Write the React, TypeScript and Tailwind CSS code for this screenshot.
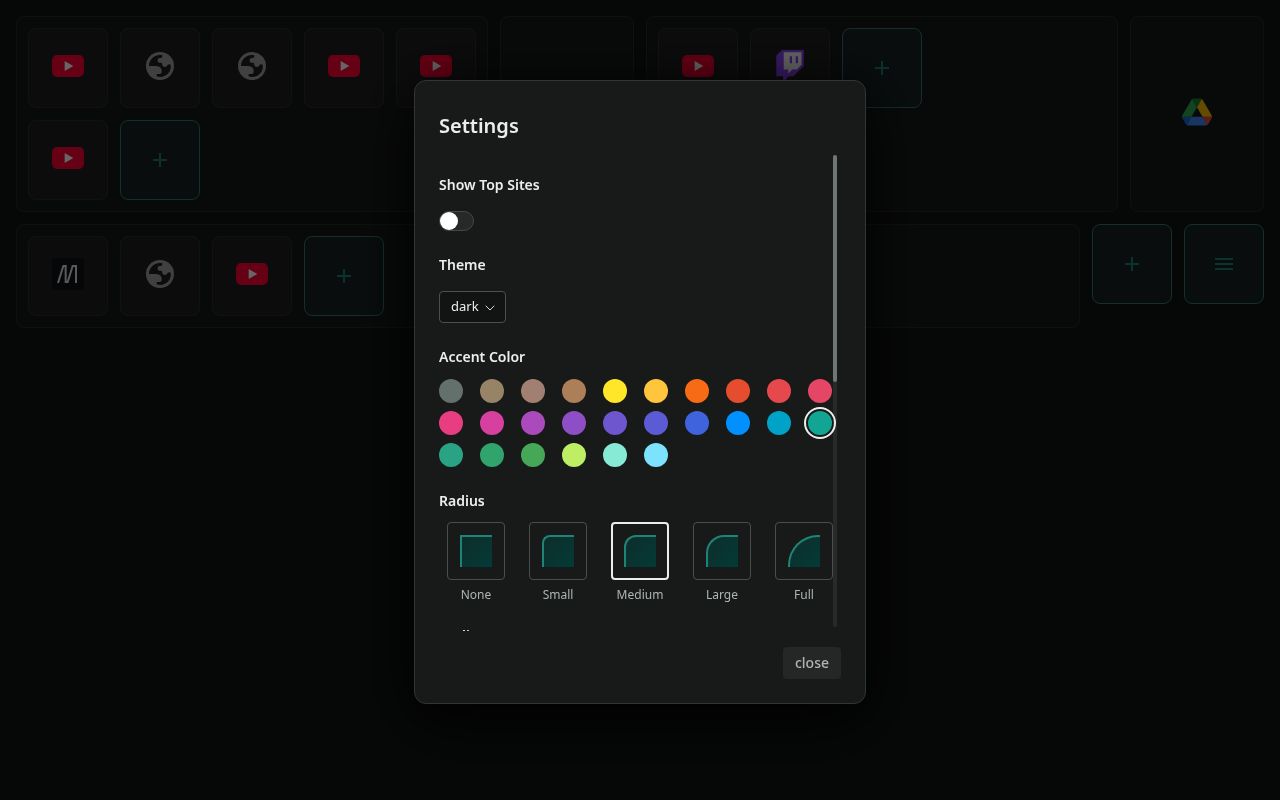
import { useState } from 'react';
import type { ReactNode } from 'react';
import { MdAdd, MdMenu } from 'react-icons/md';

const accents = [
  { name: 'gray', bg: 'bg-[#63706b]' },
  { name: 'gold', bg: 'bg-[#978365]' },
  { name: 'bronze', bg: 'bg-[#a18072]' },
  { name: 'brown', bg: 'bg-[#ad7f58]' },
  { name: 'yellow', bg: 'bg-[#ffe629]' },
  { name: 'amber', bg: 'bg-[#ffc53d]' },
  { name: 'orange', bg: 'bg-[#f76b15]' },
  { name: 'tomato', bg: 'bg-[#e54d2e]' },
  { name: 'red', bg: 'bg-[#e5484d]' },
  { name: 'ruby', bg: 'bg-[#e54666]' },
  { name: 'crimson', bg: 'bg-[#e93d82]' },
  { name: 'pink', bg: 'bg-[#d6409f]' },
  { name: 'plum', bg: 'bg-[#ab4aba]' },
  { name: 'purple', bg: 'bg-[#8e4ec6]' },
  { name: 'violet', bg: 'bg-[#6e56cf]' },
  { name: 'iris', bg: 'bg-[#5b5bd6]' },
  { name: 'indigo', bg: 'bg-[#3e63dd]' },
  { name: 'blue', bg: 'bg-[#0090ff]' },
  { name: 'cyan', bg: 'bg-[#00a2c7]' },
  { name: 'teal', bg: 'bg-[#12a594]' },
  { name: 'jade', bg: 'bg-[#29a383]' },
  { name: 'green', bg: 'bg-[#30a46c]' },
  { name: 'grass', bg: 'bg-[#46a758]' },
  { name: 'lime', bg: 'bg-[#bdee63]' },
  { name: 'mint', bg: 'bg-[#86ead4]' },
  { name: 'sky', bg: 'bg-[#7ce2fe]' },
];

const radii = [
  { name: 'None', corner: 'rounded-none' },
  { name: 'Small', corner: 'rounded-tl-lg' },
  { name: 'Medium', corner: 'rounded-tl-xl' },
  { name: 'Large', corner: 'rounded-tl-[18px]' },
  { name: 'Full', corner: 'rounded-tl-[30px]' },
];

function YouTube() {
  return (
    <svg viewBox="0 0 96 96" className="w-8 h-8">
      <rect x="0" y="15" width="96" height="66" rx="15" fill="#ff0033" />
      <path d="M38 33v30l26-15z" fill="#fff" />
    </svg>
  );
}

function Globe() {
  return (
    <svg viewBox="0 0 96 96" className="w-8 h-8">
      <circle cx="48" cy="48" r="42" fill="#a0a1a3" />
      <path
        d="M15 48 C15 30 29 15 47 15 C50 15 53 15 55 16 V19 Q55 24 50 24 H47 Q41 24 41 30 V34 Q41 38 46 38 H50 Q55 38 55 43 V45 Q55 50 60 50 H66 Q69 50 70 46 Q72 43 76 43 L80 44 C84 63 68 81 48 81 C45 81 41 80 38 79 V72 H47 Q53 72 53 66 V62 Q52 49 37 48 Z"
        fill="#1f1f1f"
      />
    </svg>
  );
}

function Twitch() {
  return (
    <svg viewBox="0 0 2400 2800" className="w-8 h-8">
      <path d="M500 0 0 500v1800h600v500l500-500h400l900-900V0z" fill="#9146ff" />
      <path d="M2200 1300l-400 400h-400l-350 350v-350H650V200h1550z" fill="#fff" />
      <path d="M1700 550h200v600h-200zM1180 550h200v600h-200z" fill="#9146ff" />
    </svg>
  );
}

function Drive() {
  return (
    <svg viewBox="0 0 87.3 78" className="w-[30px] h-8">
      <path d="M6.6 66.85l3.85 6.65c.8 1.4 1.95 2.5 3.3 3.3L27.5 53H0c0 1.55.4 3.1 1.2 4.5z" fill="#1967d2" />
      <path d="M43.65 25L29.9 1.2c-1.35.8-2.5 1.9-3.3 3.3l-25.4 44A9.06 9.06 0 000 53h27.5z" fill="#34a853" />
      <path d="M73.55 76.8c1.35-.8 2.5-1.9 3.3-3.3l1.6-2.75 7.65-13.25c.8-1.4 1.2-2.95 1.2-4.5H59.8l5.85 11.5z" fill="#ea4335" />
      <path d="M43.65 25L57.4 1.2C56.05.4 54.5 0 52.9 0H34.4c-1.6 0-3.15.45-4.5 1.2z" fill="#188038" />
      <path d="M59.8 53H27.5L13.75 76.8c1.35.8 2.9 1.2 4.5 1.2h50.8c1.6 0 3.15-.45 4.5-1.2z" fill="#4285f4" />
      <path d="M73.4 26.5l-12.7-22c-.8-1.4-1.95-2.5-3.3-3.3L43.65 25 59.8 53h27.45c0-1.55-.4-3.1-1.2-4.5z" fill="#fbbc04" />
    </svg>
  );
}

function Monogram() {
  return (
    <svg viewBox="0 0 96 96" className="w-8 h-8">
      <rect width="96" height="96" rx="12" fill="#111216" />
      <path d="M18 75 34 24h7v48h6L62 24h10v51" fill="none" stroke="#e0e0e0" strokeWidth="6" />
    </svg>
  );
}

function Tile({ label, children }: { label: string; children: ReactNode }) {
  return (
    <a
      href="#"
      aria-label={label}
      className="w-20 h-20 pb-1 flex items-center justify-center rounded-lg border border-[#2f2f2f] bg-[#1f1f1f]"
    >
      {children}
    </a>
  );
}

function ActionTile({ label, children }: { label: string; children: ReactNode }) {
  return (
    <button
      aria-label={label}
      className="w-20 h-20 shrink-0 flex items-center justify-center rounded-lg border border-[#30766c] bg-[#182223] text-[#207e73]"
    >
      {children}
    </button>
  );
}

function Group({ className = '', children }: { className?: string; children?: ReactNode }) {
  return (
    <section
      className={`${className} p-[11px] flex flex-wrap content-start gap-3 rounded-lg border border-[#272a29] bg-[#161918]`}
    >
      {children}
    </section>
  );
}

function Dashboard() {
  return (
    <main className="p-4 flex flex-col gap-3">
      <div className="grid grid-cols-[472px_1fr_472px_1fr] gap-3">
        <Group>
          <Tile label="YouTube"><YouTube /></Tile>
          <Tile label="Website"><Globe /></Tile>
          <Tile label="Website"><Globe /></Tile>
          <Tile label="YouTube"><YouTube /></Tile>
          <Tile label="YouTube"><YouTube /></Tile>
          <Tile label="YouTube"><YouTube /></Tile>
          <ActionTile label="Add site"><MdAdd size={24} /></ActionTile>
        </Group>
        <Group />
        <Group>
          <Tile label="YouTube"><YouTube /></Tile>
          <Tile label="Twitch"><Twitch /></Tile>
          <ActionTile label="Add site"><MdAdd size={24} /></ActionTile>
        </Group>
        <a
          href="#"
          aria-label="Google Drive"
          className="pb-1 flex items-center justify-center rounded-lg border border-[#272a29] bg-[#161918]"
        >
          <Drive />
        </a>
      </div>

      <div className="flex items-start gap-3">
        <Group className="flex-1">
          <Tile label="Monogram"><Monogram /></Tile>
          <Tile label="Website"><Globe /></Tile>
          <Tile label="YouTube"><YouTube /></Tile>
          <ActionTile label="Add site"><MdAdd size={24} /></ActionTile>
        </Group>
        <ActionTile label="Add group"><MdAdd size={24} /></ActionTile>
        <ActionTile label="Menu"><MdMenu size={24} /></ActionTile>
      </div>
    </main>
  );
}

function SettingsDialog() {
  const [topSites, setTopSites] = useState(false);
  const [theme, setTheme] = useState('dark');
  const [accent, setAccent] = useState('teal');
  const [radius, setRadius] = useState('Medium');

  return (
    <div
      role="dialog"
      aria-labelledby="settings-title"
      className="w-full max-w-[452px] p-6 rounded-xl border border-[#313534] bg-[#181a19] shadow-[0_12px_60px_rgba(0,0,0,0.6),0_16px_64px_rgba(0,0,0,0.6)]"
    >
      <h1 id="settings-title" className="pt-[7px] pb-[11px] text-xl leading-7 font-semibold">
        Settings
      </h1>

      <div className="relative h-[480px] overflow-hidden pt-6">
        {/* scrollbar */}
        <div className="absolute top-1 bottom-1 right-1 w-1 rounded-full bg-[#272a29]">
          <div className="h-[227px] rounded-full bg-[#6f7674]"></div>
        </div>

        <label htmlFor="top-sites" className="block text-sm font-semibold">Show Top Sites</label>
        <input
          id="top-sites"
          type="checkbox"
          checked={topSites}
          onChange={(e) => setTopSites(e.target.checked)}
          className="block mt-4 w-[35px] h-5 appearance-none rounded-full border border-[#434746] bg-[#262928] before:block before:w-[18px] before:h-[18px] before:rounded-full before:bg-white checked:before:translate-x-[15px]"
        />

        <label htmlFor="theme" className="block mt-6 text-sm font-semibold">Theme</label>
        <div className="relative mt-4 w-[67px]">
          <select
            id="theme"
            value={theme}
            onChange={(e) => setTheme(e.target.value)}
            className="block w-full h-8 pl-[11px] appearance-none rounded border border-[#4b504e] bg-[#121413] text-[13px] text-[#eceeed]"
          >
            <option>dark</option>
            <option>light</option>
          </select>
          <svg viewBox="0 0 10 6" className="absolute right-[11px] top-[14px] w-[10px] h-[6px] pointer-events-none">
            <path d="M1 1l4 4 4-4" fill="none" stroke="#d4d8d6" strokeLinecap="round" strokeLinejoin="round" />
          </svg>
        </div>

        <h2 className="mt-6 text-sm font-semibold">Accent Color</h2>
        <div className="mt-3 grid grid-cols-10 gap-2">
          {accents.map((a) => (
            <input
              key={a.name}
              type="radio"
              name="accent"
              aria-label={a.name}
              checked={accent === a.name}
              onChange={() => setAccent(a.name)}
              className={`${a.bg} relative w-6 h-6 appearance-none rounded-full outline-offset-2 outline-[#eceeed] checked:outline-2`}
            />
          ))}
        </div>

        <h2 className="mt-6 text-sm font-semibold">Radius</h2>
        <div className="mt-[11px] grid grid-cols-5 gap-2">
          {radii.map((r) => (
            <label key={r.name} className="flex flex-col items-center gap-[7px] text-xs text-[#adb5b2]">
              <input
                type="radio"
                name="radius"
                checked={radius === r.name}
                onChange={() => setRadius(r.name)}
                className="peer sr-only"
              />
              <span className="w-[58px] h-[58px] flex items-center justify-center rounded border border-[#494d4b] peer-checked:border-2 peer-checked:border-[#eceeed]">
                <span className={`${r.corner} w-8 h-8 border-t-2 border-l-2 border-[#208377] bg-linear-to-br from-[#0d2d2a] to-[#023b37]`}></span>
              </span>
              {r.name}
            </label>
          ))}
        </div>

        <h2 className="mt-[23px] text-sm font-semibold">Scaling</h2>
      </div>

      <div className="mt-4 flex justify-end">
        <button className="h-8 px-3 rounded bg-[#252726] text-sm font-medium text-[#b0b5b3]">close</button>
      </div>
    </div>
  );
}

export default function App() {
  return (
    <div className="min-h-screen bg-[#101312] text-[#eceeed] font-['Noto_Sans',sans-serif]">
      <Dashboard />
      <div className="fixed inset-0 flex items-start justify-center pt-20 bg-black/60">
        <SettingsDialog />
      </div>
    </div>
  );
}
